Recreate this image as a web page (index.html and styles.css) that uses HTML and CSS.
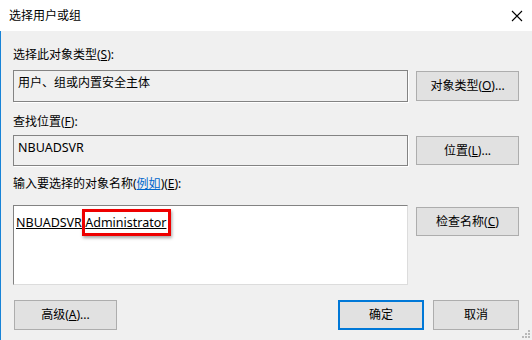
FILE: index.html
```html
<!DOCTYPE html>
<html lang="zh-CN">
<head>
<meta charset="utf-8">
<title>选择用户或组</title>
<link rel="stylesheet" href="styles.css">
</head>
<body>
<div class="window">
  <div class="titlebar">
    <span class="title">选择用户或组</span>
    <svg class="close" width="12" height="12" viewBox="0 0 12 12"><path d="M1 1 L11 11 M11 1 L1 11" stroke="#000" stroke-width="1.1" fill="none"/></svg>
  </div>
  <div class="content">
    <div class="label l1">选择此对象类型(<u>S</u>):</div>
    <div class="row r1">
      <div class="field disabled">用户、组或内置安全主体</div>
      <button class="btn">对象类型(<u>O</u>)...</button>
    </div>
    <div class="label l2">查找位置(<u>F</u>):</div>
    <div class="row r2">
      <div class="field disabled"><span class="lat">NBUADSVR</span></div>
      <button class="btn">位置(<u>L</u>)...</button>
    </div>
    <div class="label l3">输入要选择的对象名称(<a class="link">例如</a>)(<u>E</u>):</div>
    <div class="row r3">
      <div class="field names"><span class="name lat">NBUADSVR.<span class="mark">Administrator</span></span></div>
      <button class="btn check">检查名称(<u>C</u>)</button>
    </div>
    <div class="footer">
      <button class="btn adv">高级(<u>A</u>)...</button>
      <div class="spacer"></div>
      <button class="btn ok">确定</button>
      <button class="btn cancel">取消</button>
    </div>
  </div>
  <svg class="grip" width="10" height="10" viewBox="0 0 10 10">
    <rect x="7" y="1" width="2" height="2" fill="#b8b8b8"/>
    <rect x="4" y="4" width="2" height="2" fill="#b8b8b8"/>
    <rect x="7" y="4" width="2" height="2" fill="#b8b8b8"/>
    <rect x="1" y="7" width="2" height="2" fill="#b8b8b8"/>
    <rect x="4" y="7" width="2" height="2" fill="#b8b8b8"/>
    <rect x="7" y="7" width="2" height="2" fill="#b8b8b8"/>
  </svg>
</div>
</body>
</html>
```
FILE: styles.css
```css
* { box-sizing: border-box; }
html, body { margin: 0; padding: 0; }
body {
  width: 532px;
  height: 340px;
  overflow: hidden;
  font-family: "Noto Sans", "Noto Sans CJK SC", sans-serif;
  font-size: 12px;
  line-height: 16px;
  color: #000;
  background: #f0f0f0;
}
.window {
  position: relative;
  width: 532px;
  height: 340px;
  background: #f0f0f0;
}
.titlebar {
  height: 31px;
  background: #fff;
  display: flex;
  align-items: center;
  padding-left: 9px;
  padding-right: 9px;
}
.title { flex: 1; font-size: 12px; }
.close { display: block; }
.content {
  border-left: 1px solid #1883d7;
  height: 309px;
  padding: 0 13px 0 12px;
}
.label { height: 16px; white-space: nowrap; }
.l1 { padding-top: 16px; height: 32px; }
.l2 { margin-top: 12px; }
.l3 { margin-top: 10px; }
.link { color: #0066cc; text-decoration: underline; }
.lat { font-size: 12.5px; }
.row {
  display: flex;
  align-items: center;
  gap: 8px;
}
.r1 { margin-top: 7px; height: 32px; }
.r2 { margin-top: 5px; height: 31px; }
.r3 { margin-top: 13px; height: 80px; align-items: flex-start; }
.field {
  width: 395px;
  height: 100%;
  padding: 4px 4px;
  white-space: nowrap;
}
.disabled {
  background: #f0f0f0;
  border: 1px solid #838383;
  box-shadow: 1px 1px 0 #ffffff;
}
.names {
  background: #fff;
  border-top: 1px solid #828282;
  border-left: 1px solid #828282;
  border-right: 1px solid #dcdcdc;
  border-bottom: 1px solid #dcdcdc;
  padding: 9px 2px;
}
.name { text-decoration: underline; }
.mark { position: relative; }
.mark::after {
  content: "";
  position: absolute;
  left: -3px;
  right: -5px;
  top: -5px;
  bottom: -5px;
  border: 3px solid #ee0000;
  box-shadow: 1px 2px 3px rgba(0,0,0,0.35);
}
.btn {
  font: inherit;
  color: #000;
  background: #e1e1e1;
  border: 1px solid #adadad;
  width: 103px;
  height: 30px;
  padding: 0;
  text-align: center;
  flex: none;
}
.r2 .btn { height: 29px; }
.check { margin-top: 2px; height: 29px; }
.footer {
  display: flex;
  margin-top: 15px;
  padding-left: 1px;
}
.footer .btn { height: 30px; }
.spacer { flex: 1; }
.ok {
  width: 86px;
  border: 2px solid #0078d7;
  margin-right: 9px;
}
.cancel { width: 86px; }
.grip {
  position: absolute;
  right: 1px;
  bottom: 1px;
}
```
